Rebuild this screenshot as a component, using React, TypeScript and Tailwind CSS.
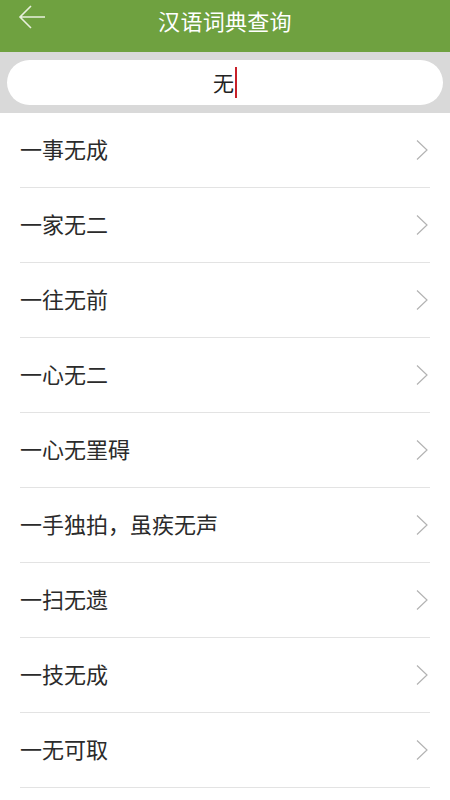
import { useState } from 'react';

const words = [
  '一事无成',
  '一家无二',
  '一往无前',
  '一心无二',
  '一心无罣碍',
  '一手独拍，虽疾无声',
  '一扫无遗',
  '一技无成',
  '一无可取',
];

function Chevron() {
  return (
    <svg width="14" height="22" viewBox="0 0 14 22" fill="none">
      <path d="M2 1.5 L12 11 L2 20.5" stroke="#b3b3b3" strokeWidth="1.2" />
    </svg>
  );
}

export default function App() {
  const [query] = useState('无');

  return (
    <div
      className="w-[450px] h-[800px] overflow-hidden bg-white"
      style={{ fontFamily: '"Noto Sans CJK SC", "Noto Sans", sans-serif' }}
    >
      <header className="relative h-[52px] bg-[#6fa140] flex items-center justify-center">
        <button className="absolute left-[18px] top-[4px] p-0">
          <svg width="28" height="26" viewBox="0 0 28 26" fill="none">
            <path d="M27 13 H3 M13 2 L2 13 L13 24" stroke="#e8f0dc" strokeWidth="1.6" />
          </svg>
        </button>
        <h1 className="text-white text-[22px] leading-none -mt-[13px] tracking-[0.3px]">汉语词典查询</h1>
      </header>

      <div className="h-[61px] bg-[#d9d9d9] px-[7px] pt-[8px]">
        <div className="h-[45px] bg-white rounded-full flex items-center justify-center">
          <span className="text-[21px] text-[#222] leading-none -mt-[1px]">{query}</span>
          <span className="w-[2px] h-[31px] bg-[#c8202a] ml-[1px]" />
        </div>
      </div>

      <ul className="px-[20px]">
        {words.map((w) => (
          <li
            key={w}
            className="h-[75px] border-b border-[#e3e3e3] flex items-center justify-between pr-[1px]"
          >
            <span className="text-[22px] text-[#2b2b2b] leading-none -mt-[5px]">{w}</span>
            <Chevron />
          </li>
        ))}
      </ul>
    </div>
  );
}
